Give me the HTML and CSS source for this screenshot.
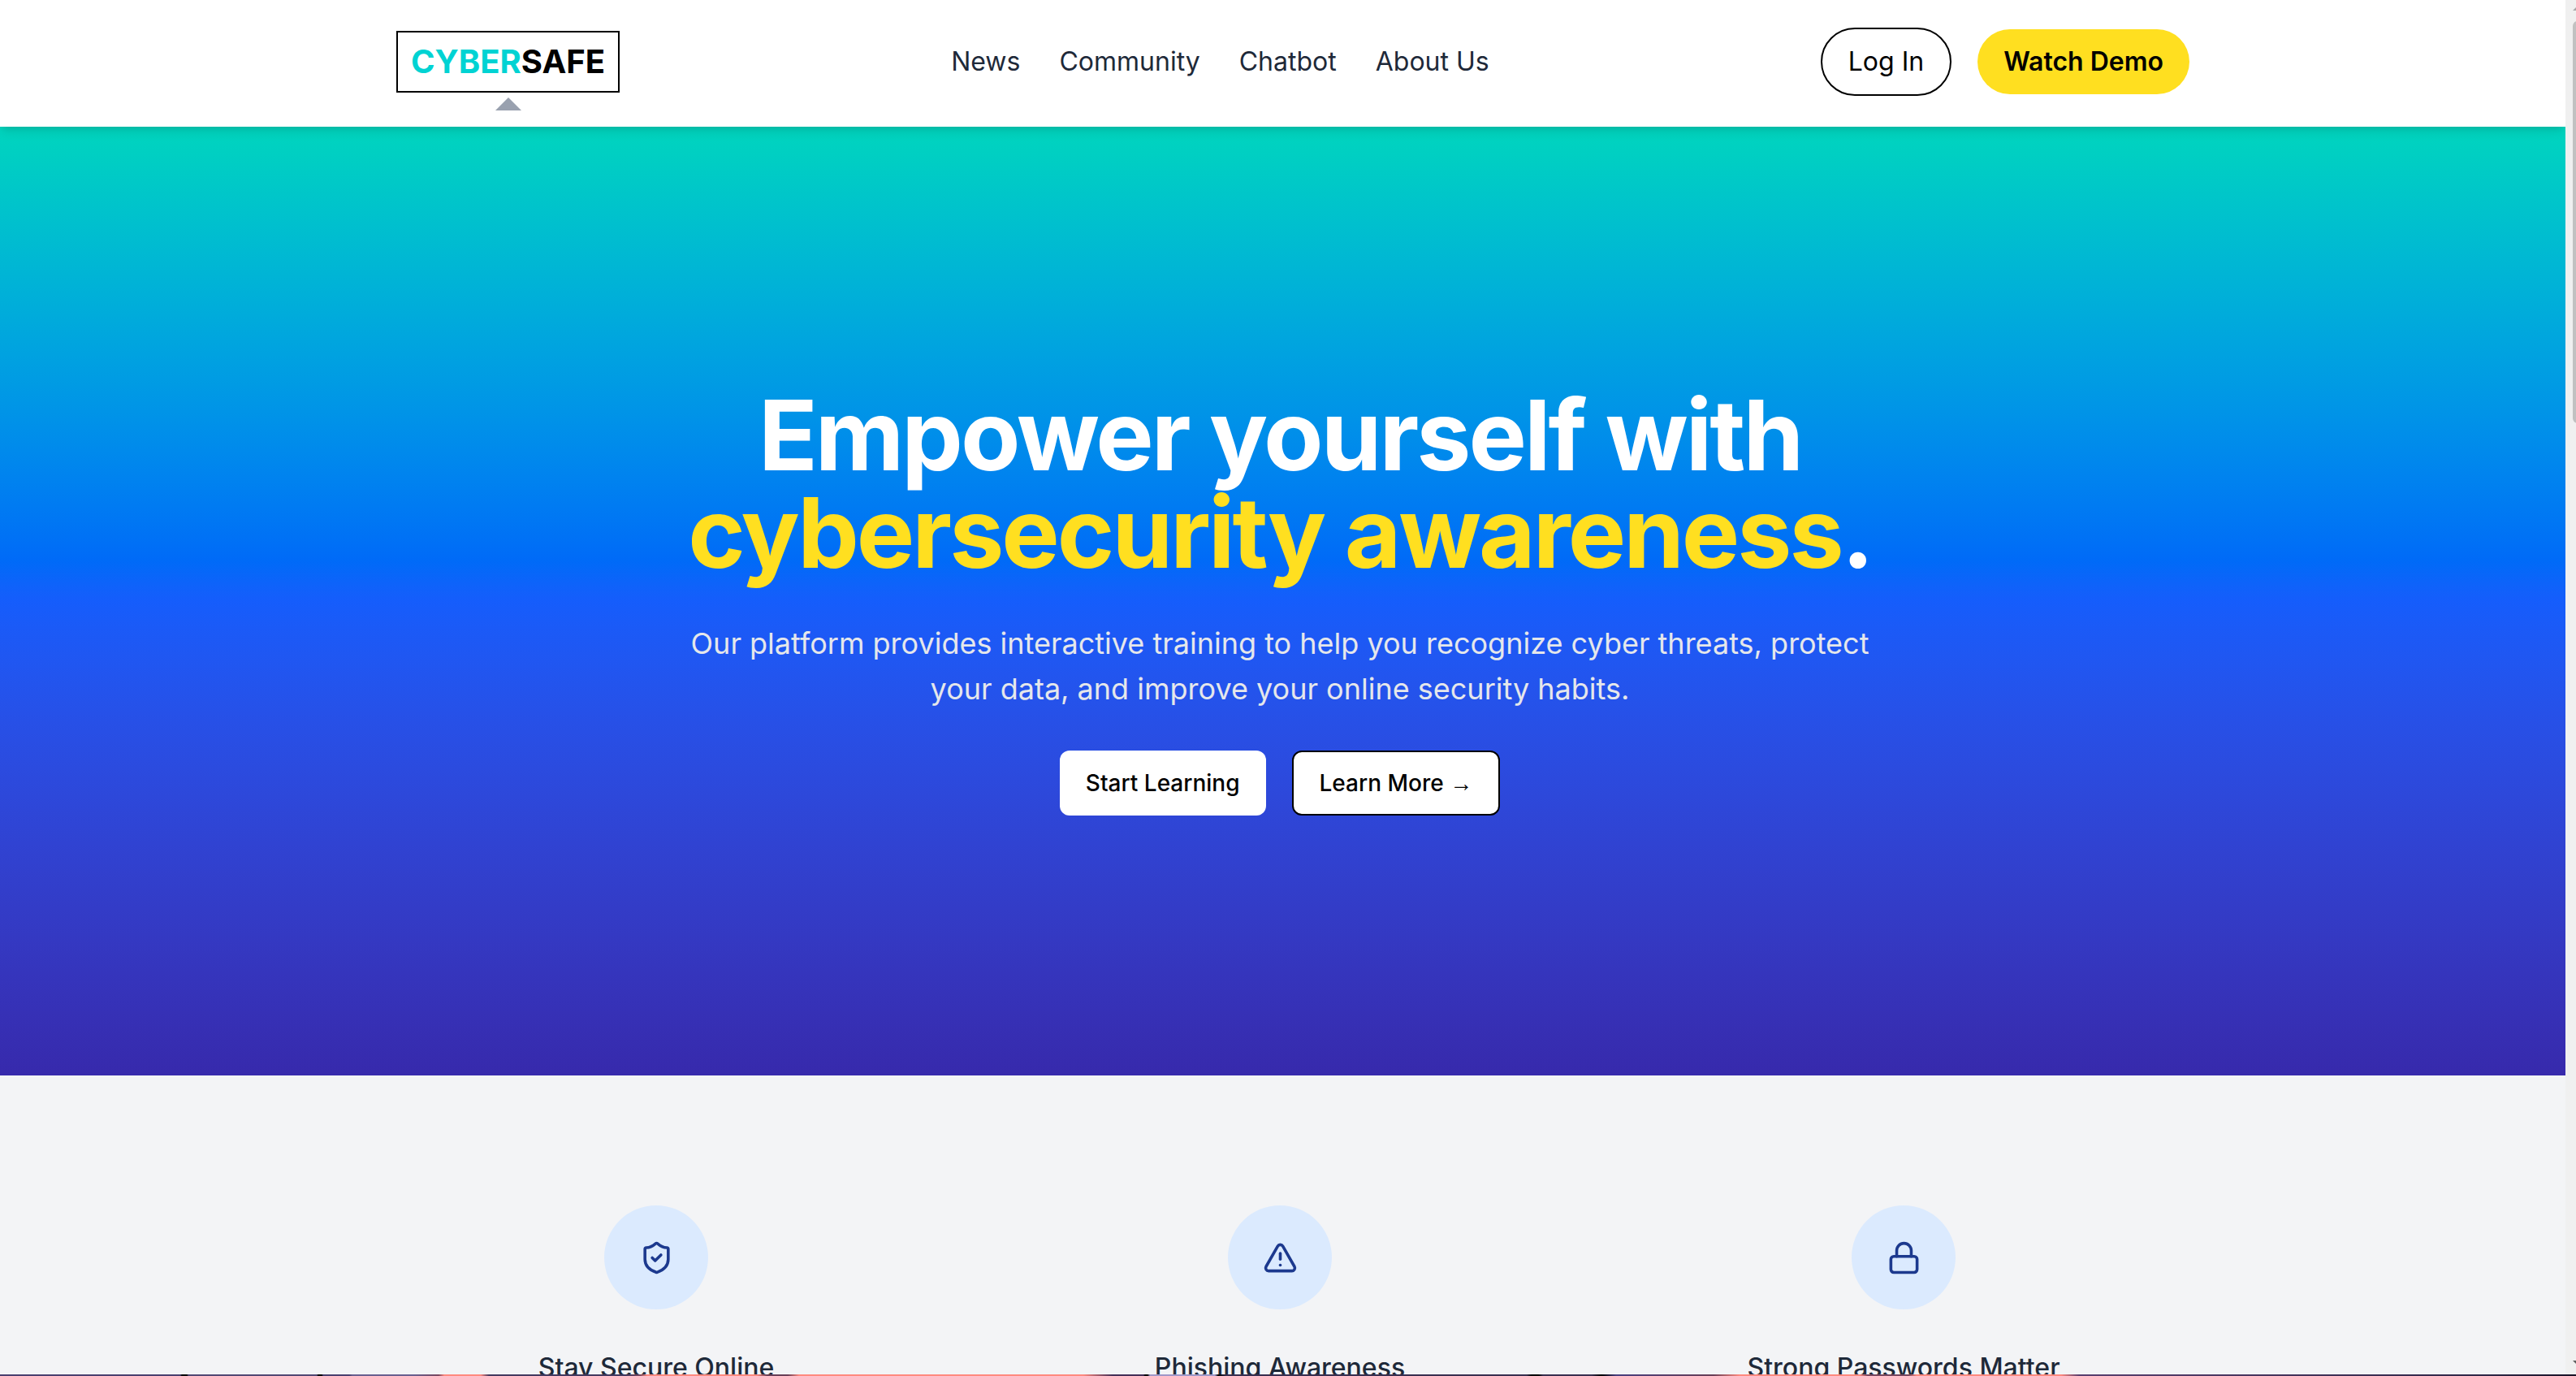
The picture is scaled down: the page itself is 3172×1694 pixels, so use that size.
FILE: index.html
```html
<!DOCTYPE html>
<html lang="en">
<head>
<meta charset="UTF-8">
<meta name="viewport" content="width=device-width, initial-scale=1.0">
<title>CyberSafe</title>
<link rel="stylesheet" href="styles.css">
</head>
<body>

<div class="page">
    <header class="navbar">
        <a class="logo"><span class="logo-accent">CYBER</span>SAFE</a>
        <nav class="nav-links">
            <a>News</a>
            <a>Community</a>
            <a>Chatbot</a>
            <a>About Us</a>
        </nav>
        <div class="nav-buttons">
            <button class="login-btn">Log In</button>
            <button class="demo-btn">Watch Demo</button>
        </div>
    </header>

    <section class="hero">
        <h1>Empower yourself with<br><span class="highlight">cybersecurity awareness</span>.</h1>
        <p>Our platform provides interactive training to help you recognize cyber threats, protect your data, and improve your online security habits.</p>
        <div class="hero-buttons">
            <button class="btn">Start Learning</button>
            <button class="btn btn-outline">Learn More <span class="arrow">→</span></button>
        </div>
    </section>

    <section class="features">
        <div class="feature">
            <div class="feature-icon">
                <svg viewBox="0 0 24 24"><path d="M20 13c0 5-3.5 7.5-7.66 8.95a1 1 0 0 1-.67-.01C7.5 20.5 4 18 4 13V6a1 1 0 0 1 1-1c2 0 4.5-1.2 6.24-2.72a1.17 1.17 0 0 1 1.52 0C14.51 3.81 17 5 19 5a1 1 0 0 1 1 1z"/><path d="m9 12 2 2 4-4"/></svg>
            </div>
            <h3>Stay Secure Online</h3>
        </div>
        <div class="feature">
            <div class="feature-icon">
                <svg viewBox="0 0 24 24"><path d="m21.73 18-8-14a2 2 0 0 0-3.48 0l-8 14A2 2 0 0 0 4 21h16a2 2 0 0 0 1.73-3"/><path d="M12 9v4"/><path d="M12 17h.01"/></svg>
            </div>
            <h3>Phishing Awareness</h3>
        </div>
        <div class="feature">
            <div class="feature-icon">
                <svg viewBox="0 0 24 24"><rect width="18" height="11" x="3" y="11" rx="2"/><path d="M7 11V7a5 5 0 0 1 10 0v4"/></svg>
            </div>
            <h3>Strong Passwords Matter</h3>
        </div>
    </section>
</div>

<div class="scrollbar">
    <span class="scroll-up"></span>
    <div class="scroll-thumb"></div>
    <span class="scroll-down"></span>
</div>

<!-- desktop showing under the window -->
<div class="desktop-edge"></div>

</body>
</html>
```

FILE: styles.css
```css
* {
    box-sizing: border-box;
    margin: 0;
    padding: 0;
}
body {
    font-family: Inter, "Liberation Sans", sans-serif;
    display: flex;
    height: 100vh;
    overflow: hidden;
    background-color: #f3f4f6;
}
button {
    font-family: inherit;
    border: none;
    color: #000;
}
.page {
    flex: 1;
    overflow: hidden;
}

/* navbar */
.navbar {
    position: relative;
    z-index: 1;
    display: flex;
    justify-content: space-between;
    align-items: center;
    height: 156px;
    padding: 0 463px 4px 488px;
    background-color: #fff;
    box-shadow: 0 8px 12px -2px rgba(0, 0, 0, 0.1), 0 4px 8px -4px rgba(0, 0, 0, 0.1);
}
.logo {
    position: relative;
    padding: 8px 16px;
    border: 2px solid #000;
    font-size: 40px;
    line-height: 56px;
    font-weight: 700;
    color: #000;
}
.logo-accent {
    color: #00d3d3;
}
.logo::after {
    content: "";
    position: absolute;
    top: 80px;
    left: 50%;
    margin-left: -16px;
    border-left: 16px solid transparent;
    border-right: 16px solid transparent;
    border-bottom: 16px solid #99a1af;
}
.nav-links {
    display: flex;
    gap: 48px;
    font-size: 32px;
    line-height: 48px;
    color: #1e2939;
}
.nav-buttons {
    display: flex;
    align-items: center;
    gap: 32px;
}
.login-btn, .demo-btn {
    padding: 16px 32px;
    border-radius: 42px;
    font-size: 32px;
    line-height: 48px;
}
.login-btn {
    border: 2px solid #000;
    background-color: #fff;
}
.demo-btn {
    background-color: #ffdf20;
    font-weight: 600;
}

/* hero */
.hero {
    display: flex;
    flex-direction: column;
    align-items: center;
    height: 1168px;
    padding: 320px 7px 0 0;
    text-align: center;
    background: linear-gradient(to bottom in oklab, oklch(77.7% 0.152 181.912), oklch(54.6% 0.245 262.881), oklch(39.8% 0.195 277.366));
}
.hero h1 {
    font-size: 120px;
    line-height: 120px;
    font-weight: 700;
    letter-spacing: -3px;
    color: #fff;
}
.highlight {
    color: #ffdf20;
}
.hero p {
    max-width: 1500px;
    margin: 48px 0;
    font-size: 36px;
    line-height: 56px;
    color: #e5e7eb;
}
.hero-buttons {
    display: flex;
    gap: 32px;
}
.btn {
    height: 80px;
    padding: 0 32px;
    border-radius: 12px;
    background-color: #fff;
    font-size: 28px;
    line-height: 40px;
    font-weight: 500;
}
.btn-outline {
    border: 2px solid #000;
}
.arrow {
    font-family: "Liberation Sans", sans-serif;
}

/* features */
.features {
    display: flex;
    justify-content: center;
    padding: 160px 7px 0 0;
    background-color: #f3f4f6;
}
.feature {
    display: flex;
    flex-direction: column;
    align-items: center;
    width: 768px;
}
.feature-icon {
    display: flex;
    align-items: center;
    justify-content: center;
    width: 128px;
    height: 128px;
    border-radius: 50%;
    background-color: #dbeafe;
}
.feature-icon svg {
    width: 43px;
    height: 43px;
    fill: none;
    stroke: #1c398e;
    stroke-width: 2;
    stroke-linecap: round;
    stroke-linejoin: round;
}
.feature h3 {
    margin-top: 44px;
    font-size: 32px;
    line-height: 56px;
    font-weight: 500;
    white-space: nowrap;
    color: #1e2939;
}

/* scrollbar */
.scrollbar {
    display: flex;
    flex-direction: column;
    width: 13px;
    padding: 8px 0 14px 9px;
    overflow: hidden;
    background-color: #f0f0f0;
}
.scroll-up, .scroll-down {
    width: 10px;
    border-left: 5px solid transparent;
    border-right: 5px solid transparent;
}
.scroll-up {
    margin-bottom: 13px;
    border-bottom: 5px solid #a8a8a8;
}
.scroll-down {
    margin-top: auto;
    border-top: 5px solid #606060;
}
.scroll-thumb {
    width: 12px;
    height: 495px;
    border-radius: 6px;
    background-color: #c1c1c1;
}

.desktop-edge {
    position: absolute;
    left: 0;
    right: 0;
    bottom: 0;
    height: 2px;
    background: linear-gradient(to right, #4a4070 0 222px, #000 224px 230px, #524874 232px 390px, #000 392px 396px, #4a4070 398px 430px, #6a6090 434px 510px, #7a4860 540px, #ff8a80 547px 592px, #453a60 602px 770px, #7a4860 788px, #ff8a80 797px 932px, #6a4058 945px 970px, #ff8a80 984px 1334px, #453058 1370px 1408px, #000 1410px 1413px, #a098c8 1416px 1496px, #000 1500px, #3a3050 1510px 1880px, #000 1886px 1894px, #3a3050 1900px 1960px, #000 1972px, #4a4080 1990px, #6a4058 2110px, #ff8a80 2142px 2290px, #7a4860 2300px 2350px, #ff8a80 2360px 2538px, #5a4070 2560px, #302848 3060px, #1a1428);
}
```
